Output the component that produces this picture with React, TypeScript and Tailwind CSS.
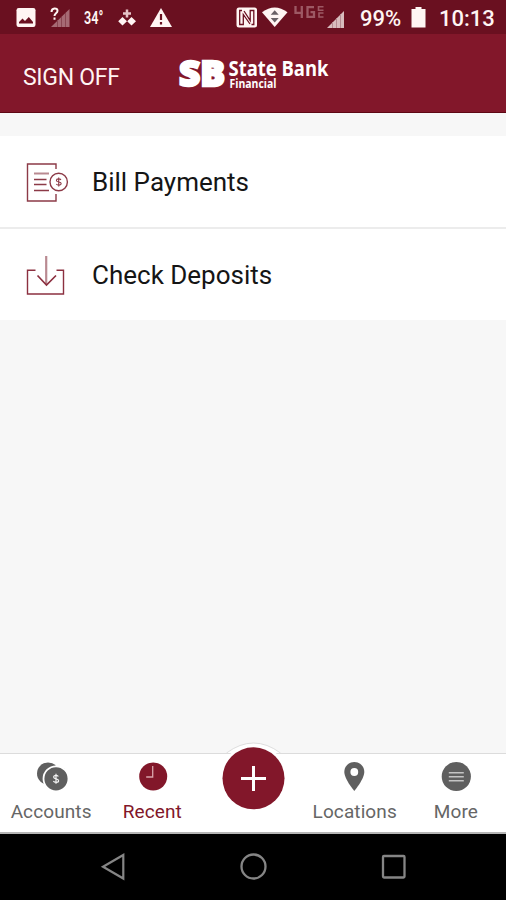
import type { ReactNode } from 'react';

function StatusBar() {
  return (
    <div className="flex h-[34px] items-start bg-[#6a1020] text-[#fff5f3]">
      <svg className="ml-4 h-[34px] w-5 shrink-0" viewBox="16 0 20 34">
        <rect x="16.5" y="8" width="19" height="19" rx="2.2" fill="#fff5f3" />
        <path d="M19 23.5v-1.500l3.500-3.500 2.500 2.500 3.800-4 4.200 5v1.500z" fill="#6a1020" />
      </svg>
      <svg className="ml-3.5 h-[34px] w-5 shrink-0" viewBox="50 0 20 34">
        <path d="M69.5 9v18H51z" fill="#a66a74" />
        <path d="M57.5 20v7M61.5 17v10M65.5 13v14" stroke="#8a4652" strokeWidth="1" />
        <path d="M51.5 12c0-4.500 6-4.500 6-1.300 0 2.600-3 2.600-3 5.300M54.500 17.500v2.300" fill="none" stroke="#fff5f3" strokeWidth="2" />
      </svg>
      <div className="ml-3.5 h-[34px] w-5 shrink-0 whitespace-nowrap">
        <span className="block origin-left scale-x-[0.7] text-[18px] leading-[35px] font-semibold">34°</span>
      </div>
      <svg className="ml-3.5 h-[34px] w-5 shrink-0" viewBox="118 0 20 34" fill="#fff5f3">
        <path d="M122.500 17l4.500 4.300-4.500 4.300-4.300-4.300zM131.500 17l4.500 4.300-4.500 4.300-4.300-4.300z" />
        <path d="M127 9.500v8M123 13.500h8" stroke="#e6c4c7" strokeWidth="2.500" />
      </svg>
      <svg className="ml-3 h-[34px] w-[22px] shrink-0" viewBox="150 0 22 34">
        <path d="M161 8l11 19h-22z" fill="#fff5f3" />
        <path d="M161 14v6M161 22v2.5" stroke="#6a1020" strokeWidth="2.2" />
      </svg>
      <svg className="ml-16 h-[34px] w-[109px] shrink-0" viewBox="236 0 109 34">
        <rect x="236.5" y="7.500" width="20.5" height="20" rx="2.5" fill="#fff5f3" />
        <path d="M242 10.500h-2.300v14h3.600V14.500l6.700 9.500M251.500 24.500h2.300v-14h-3.600v10l-6.200-9.500" fill="none" stroke="#6a1020" strokeWidth="1.300" />
        <path d="M262 12.300Q274.700 2.500 287.500 12.300L274.700 27z" fill="#fff5f3" />
        <path d="M270.700 14.800l4-4.500 4 4.500zM270.700 18h8l-4 4.500z" fill="#6a6065" />
        <g fill="none" stroke="#9d5964" strokeWidth="2.300">
          <path d="M295.500 6v6.800h7.500M301.800 6v12M314 7.200h-6.500v9.700h6.500v-4.700h-3.500" />
          <path d="M323.500 6.800h-5v3.500h5M323.500 13h-4.500v4h4.500" strokeWidth="1.600" />
        </g>
        <path d="M344 11v17h-17z" fill="#d8bcbd" />
        <path d="M332.500 22v6M336.500 18v10M340.500 14v14" stroke="#b58b91" />
      </svg>
      <span className="ml-[15px] w-[43px] shrink-0 text-[22px] leading-[37px] font-medium">99%</span>
      <svg className="ml-2 h-[34px] w-4 shrink-0" viewBox="411 0 16 34">
        <path d="M415.500 7h6v2h4v18.500h-14V9h4z" fill="#fff5f3" />
      </svg>
      <span className="ml-3 shrink-0 text-[22px] leading-[37px] font-medium">10:13</span>
    </div>
  );
}

function Header() {
  return (
    <header className="flex h-[79px] items-start border-b border-[#5e0714] bg-[#82172a] text-[#fff5f3]">
      <span className="ml-[23px] w-[145px] pt-[27px] text-[23px] leading-[34px] tracking-[-0.3px]">SIGN OFF</span>
      <svg className="h-[78px] w-[180px]" viewBox="168 34 180 78" fill="#fff">
        <text x="179" y="86.300" fontFamily="Open Sans" fontWeight="800" fontSize="36" textLength="46" lengthAdjust="spacingAndGlyphs" stroke="#fff" strokeWidth="2.400">SB</text>
        <text x="228.500" y="76.300" fontFamily="Open Sans" fontWeight="700" fontSize="21" textLength="100" lengthAdjust="spacingAndGlyphs">State Bank</text>
        <text x="229.500" y="87.700" fontFamily="Open Sans" fontWeight="700" fontSize="11.500" textLength="47" lengthAdjust="spacingAndGlyphs">Financial</text>
      </svg>
    </header>
  );
}

function Row({ icon, label }: { icon: ReactNode; label: string }) {
  return (
    <div className="flex h-[91px] items-center bg-white">
      <div className="ml-6 w-[68px]">{icon}</div>
      <span className="text-[26px] leading-[32px] text-[#151515]">{label}</span>
    </div>
  );
}

function BillIcon() {
  return (
    <svg className="h-[50px] w-[48px]" viewBox="24 156 48 50" fill="none" stroke="#8c3a47" strokeWidth="1.400">
      <path d="M56 168v-5H27.500v37H56v-7" />
      <path d="M34 172.500h15" stroke="#b98a91" strokeWidth="2" />
      <path d="M34 178.500h12.500M34 183.500h12.500M34 189.500h15" />
      <circle cx="58.700" cy="181" r="8.700" />
      <path d="M61 178.800c-1-1.300-4.600-1.300-4.600.6 0 2.300 4.800 1 4.800 3.200 0 2-3.800 2-4.900.4M58.700 176.500v9" strokeWidth="1.100" />
    </svg>
  );
}

function DepositIcon() {
  return (
    <svg className="h-[50px] w-[48px]" viewBox="24 249.500 48 50" fill="none" stroke="#8c3040" strokeWidth="1.400">
      <path d="M35.500 269.700h-8v23.800h36v-23.800h-7" />
      <path d="M46.200 255.500v28" stroke="#b98a91" strokeWidth="2.200" />
      <path d="M37.500 275l9 9.500 9.500-9.500" strokeWidth="1.700" />
    </svg>
  );
}

function Tab({ icon, label, active = false }: { icon: ReactNode; label: string; active?: boolean }) {
  return (
    <div className={active ? 'flex flex-col items-center text-[#82172a]' : 'flex flex-col items-center text-[#666666]'}>
      <svg className="mt-[5px] h-9 w-10" viewBox="0 0 40 36">{icon}</svg>
      <span className="mt-[5px] pl-px text-[19px] leading-[24px] tracking-[0.1px]">{label}</span>
    </div>
  );
}

function TabBar() {
  return (
    <nav className="grid h-[81px] grid-cols-5 border-t border-b-2 border-t-[#dcdcdc] border-b-[#b5b5b5] bg-white">
      <Tab
        label="Accounts"
        icon={
          <>
            <circle cx="17" cy="14.500" r="11" fill="#5f5f5f" />
            <circle cx="25" cy="19.800" r="12.500" fill="#5f5f5f" stroke="#fff" strokeWidth="1.800" />
            <path d="M27.300 17.500c-.7-1.600-4.700-1.600-4.700.6 0 2.500 5 1.200 5 3.600 0 2.200-4.400 2.200-5.200.4M25 14.700v10" fill="none" stroke="#f5f5f5" strokeWidth="1.200" />
          </>
        }
      />
      <Tab
        active
        label="Recent"
        icon={
          <>
            <circle cx="21.200" cy="17.500" r="14" fill="#82172a" />
            <path d="M20.700 7v11h-6.500" fill="none" stroke="#d9a5ac" strokeWidth="1.300" />
          </>
        }
      />
      <div className="-mt-[12px] flex h-[74px] justify-center">
        <svg className="h-[74px] w-[76px]" viewBox="0 0 76 74">
          <path d="M11.500 11Q38.500-9 65.500 11" fill="#fff" stroke="#dedede" />
          <circle cx="38.500" cy="36" r="33.500" fill="#fff" />
          <circle cx="38.500" cy="36.300" r="31" fill="#82172a" />
          <path d="M38.500 24v25M26 36.500h25" stroke="#fff" strokeWidth="3" />
        </svg>
      </div>
      <Tab
        label="Locations"
        icon={
          <>
            <path d="M20.300 3c-5.900 0-10 4.500-10 10 0 7 10 19 10 19s10-12 10-19c0-5.500-4.100-10-10-10z" fill="#5f5f5f" />
            <circle cx="20.300" cy="13" r="3.900" fill="#fff" />
          </>
        }
      />
      <Tab
        label="More"
        icon={
          <>
            <circle cx="21.300" cy="17.500" r="14.600" fill="#5f5f5f" />
            <path d="M13.800 13.700h15M13.800 17.700h15M13.800 21.700h15" stroke="#c4c4c4" strokeWidth="1.500" />
          </>
        }
      />
    </nav>
  );
}

function SystemNav() {
  return (
    <div className="flex h-[66px] justify-between bg-black px-[100px]">
      <svg className="h-[66px] w-[26px]" viewBox="100 834 26 66" fill="none" stroke="#858585" strokeWidth="2.200">
        <path d="M123.300 855v23.500l-20.300-11.700z" />
      </svg>
      <svg className="h-[66px] w-[28px]" viewBox="239.500 834 28 66" fill="none" stroke="#858585" strokeWidth="2.300">
        <circle cx="254" cy="866.500" r="12" />
      </svg>
      <svg className="h-[66px] w-[26px]" viewBox="380.500 834 26 66" fill="none" stroke="#858585" strokeWidth="2.300">
        <rect x="383.500" y="856" width="21.500" height="21.500" rx="1" />
      </svg>
    </div>
  );
}

export default function App() {
  return (
    <div className="flex h-[900px] w-[506px] flex-col overflow-hidden bg-[#f7f7f7] font-[Roboto,sans-serif]">
      <StatusBar />
      <Header />
      <main className="flex flex-1 flex-col pt-[23px]">
        <Row icon={<BillIcon />} label="Bill Payments" />
        <div className="h-[2px] bg-[#ececec]" />
        <Row icon={<DepositIcon />} label="Check Deposits" />
      </main>
      <TabBar />
      <SystemNav />
    </div>
  );
}
